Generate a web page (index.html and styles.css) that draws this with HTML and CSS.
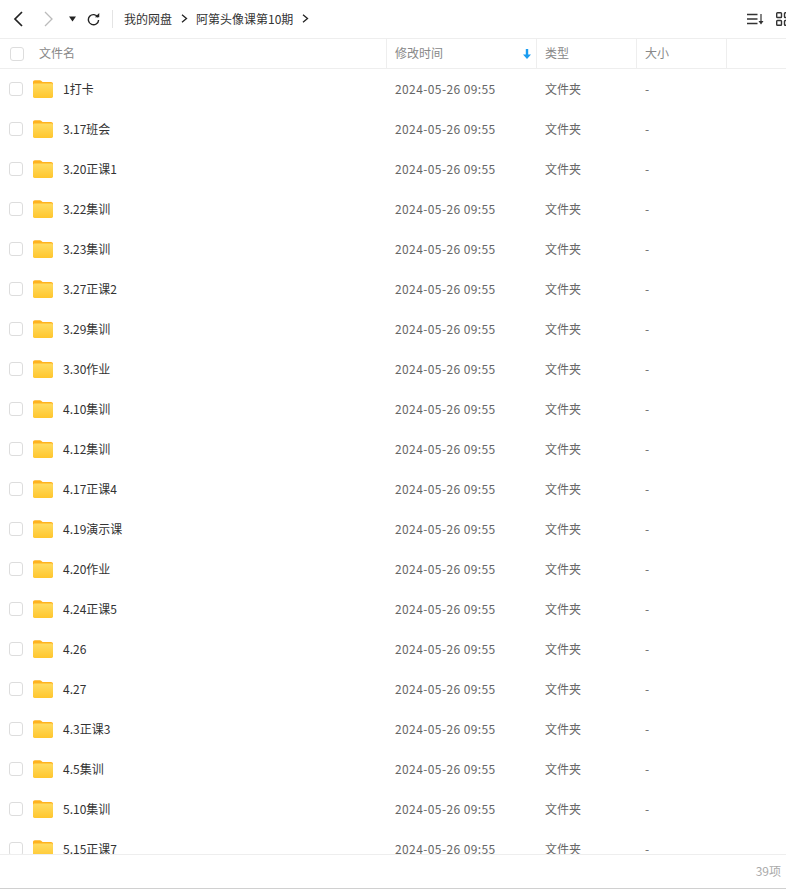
FILE: index.html
```html
<!DOCTYPE html>
<html lang="zh-CN">
<head>
<meta charset="utf-8">
<title>阿第头像课第10期</title>
<link rel="stylesheet" href="styles.css">
</head>
<body>
<div class="app">
  <header class="toolbar">
    <div class="nav">
      <svg class="ic-back" width="12" height="16" viewBox="0 0 12 16"><path d="M10 1 3 8l7 7" fill="none" stroke="#222" stroke-width="1.7"/></svg>
      <svg class="ic-fwd" width="12" height="16" viewBox="0 0 12 16"><path d="M2 1l7 7-7 7" fill="none" stroke="#bbb" stroke-width="1.3"/></svg>
      <svg class="ic-drop" width="7" height="6" viewBox="0 0 7 6"><path d="M0 .5h7L3.500 5.500z" fill="#222"/></svg>
      <svg class="ic-refresh" width="13" height="13" viewBox="0 0 14 14"><path d="M11.800 4.500A5.500 5.500 0 1 0 12.500 7.500" fill="none" stroke="#222" stroke-width="1.500"/><path d="M8.500 4.700h4.700V0z" fill="#222"/></svg>
      <span class="sep"></span>
    </div>
    <nav class="crumbs">
      <span>我的网盘</span><span class="gt"><svg width="7" height="9" viewBox="0 0 7 9"><path d="M1 .8 5.500 4.500 1 8.200" fill="none" stroke="#222" stroke-width="1.300"/></svg></span>
      <span>阿第头像课第10期</span><span class="gt"><svg width="7" height="9" viewBox="0 0 7 9"><path d="M1 .8 5.500 4.500 1 8.200" fill="none" stroke="#222" stroke-width="1.300"/></svg></span>
    </nav>
    <div class="tools">
      <svg width="17" height="12" viewBox="0 0 17 12"><path d="M0 1.500h10.500M0 6h10.500M0 10.500h10.500" stroke="#333" stroke-width="1.300" fill="none"/><path d="M14 1v9" stroke="#333" stroke-width="1.200"/><path d="M11.500 8h5L14 11.500z" fill="#333"/></svg>
      <svg class="ic-grid" width="14" height="14" viewBox="0 0 14 14"><g fill="none" stroke="#333" stroke-width="1.400"><rect x=".7" y=".7" width="4.800" height="4.800" rx=".8"/><rect x="8.500" y=".7" width="4.800" height="4.800" rx=".8"/><rect x=".7" y="8.500" width="4.800" height="4.800" rx=".8"/><rect x="8.500" y="8.500" width="4.800" height="4.800" rx=".8"/></g></svg>
    </div>
  </header>
  <div class="thead">
    <div class="th c-name"><span class="check check-h"></span><span class="th-name">文件名</span></div>
    <div class="th c-time">修改时间<svg class="sort" width="8" height="10" viewBox="0 0 8 10"><path d="M2.800 0h2.400v5.500H8L4 10 0 5.500h2.800z" fill="#1a9cf0"/></svg></div>
    <div class="th c-type">类型</div>
    <div class="th c-size">大小</div>
  </div>
  <main class="rows" id="rows"></main>
  <footer class="footer">39项</footer>
</div>
<svg class="defs" width="0" height="0">
  <defs>
    <linearGradient id="fg" x1="0" y1="0" x2="0" y2="1"><stop offset="0" stop-color="#ffdc62"/><stop offset="1" stop-color="#ffc62e"/></linearGradient>
    <symbol id="folder" viewBox="0 0 20 18">
      <path d="M0 2.200C0 1 .8.300 1.800.300h5c.8 0 1.200.300 1.700.8l1 .9H18c1.200 0 2 .8 2 2v11.800c0 1.200-.8 2-2 2H2c-1.200 0-2-.8-2-2z" fill="#ffb31f"/>
      <path d="M0 5.200c0-1 .8-1.700 1.800-1.700h16.400c1 0 1.800.7 1.800 1.700V16c0 1.200-.8 2-2 2H2c-1.200 0-2-.8-2-2z" fill="url(#fg)"/>
    </symbol>
  </defs>
</svg>
<script src="app.js"></script>
</body>
</html>
```

FILE: app.js
```js
var names = ["1打卡","3.17班会","3.20正课1","3.22集训","3.23集训","3.27正课2","3.29集训","3.30作业","4.10集训","4.12集训","4.17正课4","4.19演示课","4.20作业","4.24正课5","4.26","4.27","4.3正课3","4.5集训","5.10集训","5.15正课7"];
document.getElementById("rows").innerHTML = names.map(function (n) {
  return '<div class="row"><div class="c-name cell"><span class="check"></span><svg class="folder" width="20" height="18"><use href="#folder"/></svg><span class="fname">' + n + '</span></div>' +
    '<div class="c-time cell date">2024-05-26 09:55</div><div class="c-type cell">文件夹</div><div class="c-size cell">-</div></div>';
}).join("");
```

FILE: styles.css
```css
* { box-sizing: border-box; }
html, body { margin: 0; height: 100%; overflow: hidden; background: #fff; }
body { font: 12px/16px "Noto Sans CJK SC", sans-serif; color: #333; }
.app { display: flex; flex-direction: column; height: 889px; border-bottom: 1px solid #d0d0d0; }
.defs { position: absolute; }

.toolbar { flex: none; display: flex; align-items: center; height: 39px; border-bottom: 1px solid #eee; }
.nav { display: flex; align-items: center; padding-left: 12px; }
.ic-fwd { margin-left: 19px; }
.ic-drop { margin-left: 14px; }
.ic-refresh { margin-left: 11px; }
.sep { width: 1px; height: 18px; background: #e4e4e4; margin: 0 11px 0 12px; }
.crumbs { display: flex; align-items: center; color: #333; padding-bottom: 1px; }
.gt { display: flex; margin: 0 8px 0 9px; }
.tools { margin-left: auto; display: flex; align-items: center; gap: 12px; margin-right: -4px; }

.thead { flex: none; display: flex; height: 30px; border-bottom: 1px solid #eee; color: #888; }
.th { display: flex; align-items: center; padding-left: 8px; padding-bottom: 2px; border-right: 1px solid #eee; }
.c-name { width: 387px; }
.c-time { width: 150px; }
.c-type { width: 100px; }
.c-size { width: 90px; }
.thead .c-name { padding-left: 10px; }
.check-h { margin-top: 2px; }
.th-name { margin-left: 15px; }
.c-time.th { position: relative; }
.sort { position: absolute; right: 5px; top: 10px; }

.rows { flex: 1; min-height: 0; overflow: hidden; }
.row { display: flex; height: 40px; color: #666; }
.cell { display: flex; align-items: center; padding-left: 8px; }
.date { letter-spacing: .4px; }
.row .c-name { padding-left: 9px; color: #333; }
.check { flex: none; width: 14px; height: 14px; border: 1px solid #ddd; border-radius: 3px; background: #fff; }
.folder { flex: none; margin-left: 10px; }
.fname { margin-left: 10px; }

.footer { flex: none; height: 34px; border-top: 1px solid #eee; display: flex; align-items: center; justify-content: flex-end; padding-right: 5px; padding-bottom: 2px; color: #aaa; }
```
